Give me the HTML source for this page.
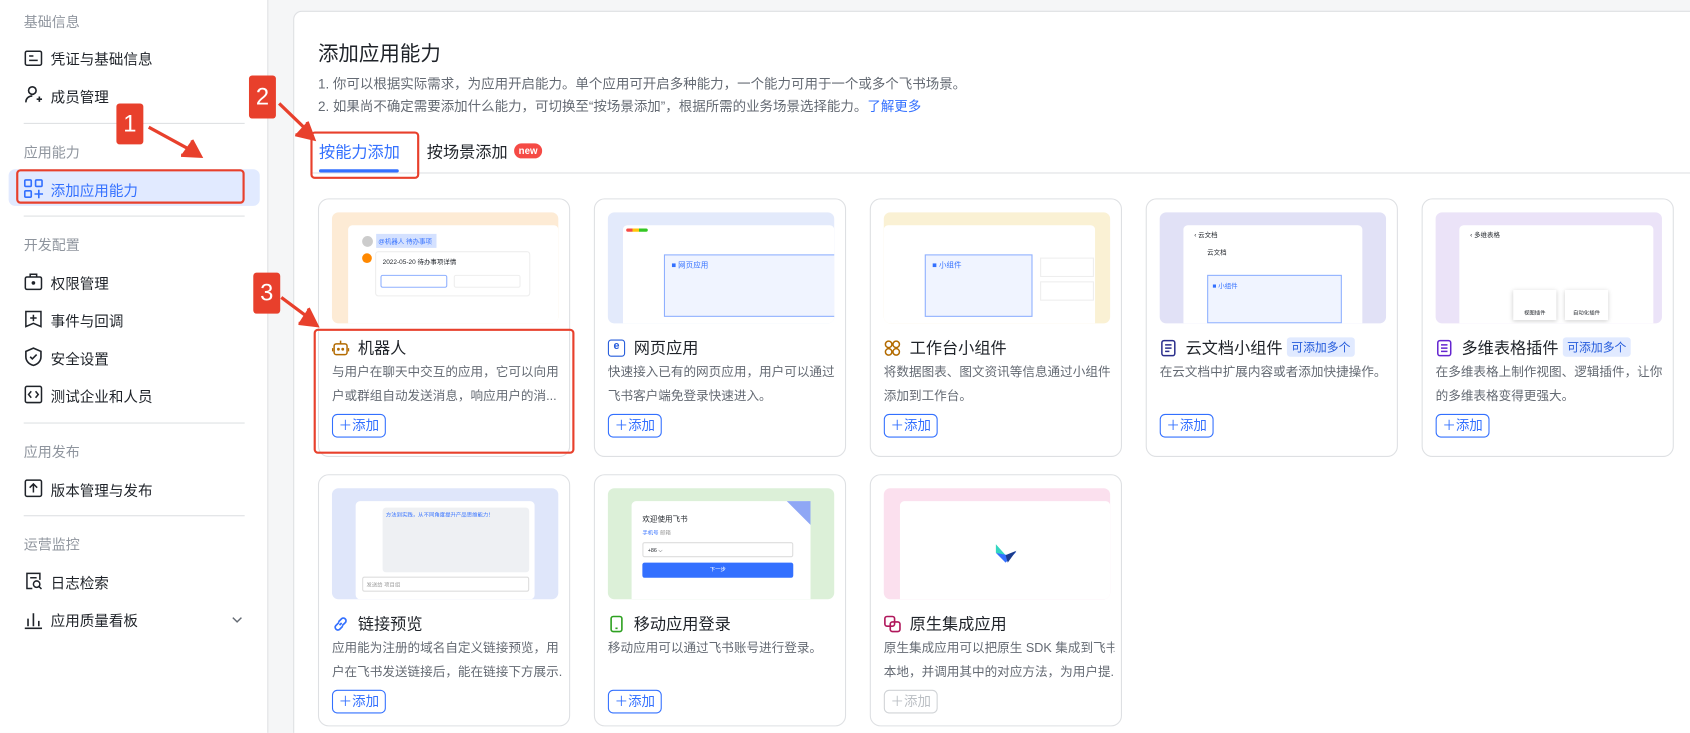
<!DOCTYPE html>
<html><head><meta charset="utf-8"><style>
*{box-sizing:border-box;margin:0;padding:0}
html,body{width:1690px;height:733px;overflow:hidden;background:#f5f6f7}
body{font-family:"Liberation Sans","Noto Sans CJK SC",sans-serif;color:#1f2329;position:relative}
#w{position:absolute;left:0;top:0;width:1568px;height:680px;overflow:hidden;transform:scale(1.0778);transform-origin:0 0}
.a{position:absolute}
.side{left:0;top:0;width:249px;height:680px;background:#fff;border-right:1px solid #dee0e3}
.sh{left:22px;font-size:13px;color:#8f959e}
.si{left:47px;font-size:13.5px;color:#1f2329}
.dv{left:22px;width:205px;height:1px;background:#dee0e3}
.main{left:272px;top:10px;width:1400px;height:700px;background:#fff;border:1px solid #dee0e3;border-radius:8px}
.card{width:234px;height:240px;border:1px solid #dee0e3;border-radius:10px;background:#fff}
.pv{left:12px;top:12px;width:210px;height:103px;border-radius:6px;overflow:hidden}
.pw{left:22px;top:12px;width:166px;height:91px;background:#fff;border-radius:4px 4px 0 0}
.ct{left:36px;top:127px;font-size:15px;color:#1f2329;white-space:nowrap}
.ci{left:12px;top:130px;width:16px;height:16px}
.cd{left:12px;top:150px;width:214px;font-size:11.7px;line-height:22px;color:#646a73;height:44px;overflow:hidden}
.cd div{white-space:nowrap;overflow:hidden}
.btn{left:12px;top:199px;width:50px;height:22px;border:1px solid #3370ff;border-radius:5px;color:#3370ff;font-size:12.5px;line-height:20px;text-align:center;background:#fff}
.tag{display:inline-block;background:#e1eaff;color:#245bdb;font-size:11px;padding:1px 4px;border-radius:3px;vertical-align:2px;margin-left:4px}
.rb{background:#e8402c;color:#fff;font-size:22px;text-align:center;border-radius:3px}
.ro{border:2.5px solid #e8402c;border-radius:4px}
</style></head><body><div id="w">
<div class="a side">
<div class="a sh" style="top:10px">基础信息</div>
<svg class="a" style="left:22px;top:45px" width="18" height="18" viewBox="0 0 18 18" fill="none" stroke="#1f2329" stroke-width="1.4"><rect x="1.5" y="2.5" width="15" height="13" rx="1.5"/><path d="M5 7h4M5 11h8"/></svg><div class="a si" style="top:44px">凭证与基础信息</div>
<svg class="a" style="left:22px;top:79px" width="18" height="18" viewBox="0 0 18 18" fill="none" stroke="#1f2329" stroke-width="1.5"><circle cx="8" cy="5" r="3.5"/><path d="M2 16c0-4 3-6 6-6M12 13h5M14.5 10.5v5"/></svg><div class="a si" style="top:79px">成员管理</div>
<div class="a dv" style="top:114px"></div>
<div class="a sh" style="top:131px">应用能力</div>
<div class="a" style="left:8px;top:157px;width:233px;height:34px;background:#e1eaff;border-radius:6px"></div>
<svg class="a" style="left:22px;top:166px" width="18" height="18" viewBox="0 0 18 18" fill="none" stroke="#3370ff" stroke-width="1.5"><rect x="1" y="1" width="6" height="6" rx="1"/><rect x="11" y="1" width="6" height="6" rx="1"/><rect x="1" y="11" width="6" height="6" rx="1"/><path d="M14 10v8M10 14h8"/></svg>
<div class="a si" style="top:166px;color:#3370ff">添加应用能力</div>
<div class="a dv" style="top:200px"></div>
<div class="a sh" style="top:217px">开发配置</div>
<svg class="a" style="left:22px;top:252px" width="18" height="18" viewBox="0 0 18 18" fill="none" stroke="#1f2329" stroke-width="1.4"><rect x="1.5" y="5" width="15" height="11.5" rx="1.5"/><path d="M6 5V2.5h6V5"/><circle cx="9" cy="10.5" r="1" fill="#1f2329"/></svg><div class="a si" style="top:252px">权限管理</div>
<svg class="a" style="left:22px;top:287px" width="18" height="18" viewBox="0 0 18 18" fill="none" stroke="#1f2329" stroke-width="1.4"><path d="M2 2h14v14l-7-3-7 3z"/><path d="M9 5v6M6 8h6"/></svg><div class="a si" style="top:287px">事件与回调</div>
<svg class="a" style="left:22px;top:322px" width="18" height="18" viewBox="0 0 18 18" fill="none" stroke="#1f2329" stroke-width="1.5"><path d="M9 1l7 3v5c0 4-3 7-7 8-4-1-7-4-7-8V4z"/><path d="M6 9l2 2 4-4"/></svg><div class="a si" style="top:322px">安全设置</div>
<svg class="a" style="left:22px;top:357px" width="18" height="18" viewBox="0 0 18 18" fill="none" stroke="#1f2329" stroke-width="1.4"><rect x="1.5" y="1.5" width="15" height="15" rx="1.5"/><path d="M7 6L4.5 9 7 12M11 6l2.5 3L11 12"/></svg><div class="a si" style="top:357px">测试企业和人员</div>
<div class="a dv" style="top:392px"></div>
<div class="a sh" style="top:409px">应用发布</div>
<svg class="a" style="left:22px;top:444px" width="18" height="18" viewBox="0 0 18 18" fill="none" stroke="#1f2329" stroke-width="1.4"><rect x="1.5" y="1.5" width="15" height="15" rx="1.5"/><path d="M9 13V5M5.5 8.5L9 5l3.5 3.5"/></svg><div class="a si" style="top:444px">版本管理与发布</div>
<div class="a dv" style="top:478px"></div>
<div class="a sh" style="top:495px">运营监控</div>
<svg class="a" style="left:22px;top:530px" width="18" height="18" viewBox="0 0 18 18" fill="none" stroke="#1f2329" stroke-width="1.4"><path d="M15 8V2H3v14h5"/><circle cx="12" cy="12" r="3"/><path d="M14 14l2.5 2.5M6 6h6"/></svg><div class="a si" style="top:530px">日志检索</div>
<svg class="a" style="left:22px;top:566px" width="18" height="18" viewBox="0 0 18 18" fill="none" stroke="#1f2329" stroke-width="1.5"><path d="M1 17h16M4 15V8M9 15V3M14 15V10"/></svg><div class="a si" style="top:565px">应用质量看板</div>
<svg class="a" style="left:214px;top:570px" width="12" height="10" viewBox="0 0 12 10" fill="none" stroke="#646a73" stroke-width="1.3"><path d="M2 3l4 4 4-4"/></svg>
</div>

<div class="a main"></div>
<div class="a" style="left:295px;top:35px;font-size:19px">添加应用能力</div>
<div class="a" style="left:295px;top:67px;font-size:12.5px;color:#646a73">1. 你可以根据实际需求，为应用开启能力。单个应用可开启多种能力，一个能力可用于一个或多个飞书场景。</div>
<div class="a" style="left:295px;top:88px;font-size:12.5px;color:#646a73">2. 如果尚不确定需要添加什么能力，可切换至“按场景添加”，根据所需的业务场景选择能力。<span style="color:#3370ff">了解更多</span></div>
<div class="a" style="left:290px;top:160px;width:1400px;height:1px;background:#dee0e3"></div>
<div class="a" style="left:296px;top:130px;font-size:15px;color:#3370ff">按能力添加</div>
<div class="a" style="left:296px;top:157px;width:74px;height:3px;background:#3370ff;border-radius:2px"></div>
<div class="a" style="left:396px;top:130px;font-size:15px">按场景添加</div>
<div class="a" style="left:477px;top:133px;width:26px;height:14px;background:#f54a45;color:#fff;font-size:9px;font-weight:bold;border-radius:7px;text-align:center;line-height:14px">new</div>

<!-- row 1 -->
<div class="a card" style="left:295px;top:184px">
 <div class="a pv" style="background:#fdebd5"><div class="a pw" style="left:15px;top:12px;width:195px">
  <div class="a" style="left:13px;top:10px;width:10px;height:10px;border-radius:50%;background:#ccc"></div>
  <div class="a" style="left:26px;top:8px;width:56px;height:13px;background:#d4e1ff;font-size:6px;padding:2px;color:#3370ff">@机器人 待办事项</div>
  <div class="a" style="left:13px;top:26px;width:9px;height:9px;border-radius:50%;background:#ff8800"></div>
  <div class="a" style="left:25px;top:24px;width:144px;height:42px;border:1px solid #eee;border-radius:3px;font-size:6px;padding:4px 6px">2022-05-20 待办事项详情</div>
  <div class="a" style="left:30px;top:46px;width:62px;height:12px;border:1px solid #8fb0ff;border-radius:2px"></div>
  <div class="a" style="left:98px;top:46px;width:62px;height:12px;border:1px solid #eee;border-radius:2px"></div>
 </div></div>
 <svg class="a ci" viewBox="0 0 16 16" fill="none" stroke="#b36b00" stroke-width="1.4"><rect x="2" y="4" width="12" height="10" rx="2"/><path d="M8 1v3M0.5 8v3M15.5 8v3"/><circle cx="6" cy="9" r=".6" fill="#b36b00"/><circle cx="10" cy="9" r=".6" fill="#b36b00"/></svg>
 <div class="a ct">机器人</div>
 <div class="a cd">与用户在聊天中交互的应用，它可以向用户或群组自动发送消息，响应用户的消...</div>
 <div class="a btn">＋添加</div>
</div>
<div class="a card" style="left:551px;top:184px">
 <div class="a pv" style="background:#e3eafb"><div class="a pw" style="left:14px;width:196px">
  <div class="a" style="left:3px;top:3px;width:20px;height:3px;border-radius:2px;background:linear-gradient(90deg,#f54a45 30%,#ffc60a 30% 60%,#34c724 60%)"></div>
  <div class="a" style="left:38px;top:27px;width:160px;height:58px;border:1px solid #8fb0ff;background:#f0f4ff;font-size:7px;color:#3370ff;padding:4px 6px">■ 网页应用</div>
 </div></div>
 <div class="a ci" style="border:1.5px solid #245bdb;border-radius:3px;font-size:10px;color:#245bdb;text-align:center;line-height:12px;font-weight:bold">e</div>
 <div class="a ct">网页应用</div>
 <div class="a cd">快速接入已有的网页应用，用户可以通过飞书客户端免登录快速进入。</div>
 <div class="a btn">＋添加</div>
</div>
<div class="a card" style="left:807px;top:184px">
 <div class="a pv" style="background:#faf1d4"><div class="a pw" style="left:0;width:196px">
  <div class="a" style="left:38px;top:27px;width:100px;height:58px;border:1px solid #8fb0ff;background:#f0f4ff;font-size:7px;color:#3370ff;padding:4px 6px">■ 小组件</div>
  <div class="a" style="left:145px;top:30px;width:50px;height:18px;border:1px solid #eee"></div>
  <div class="a" style="left:145px;top:52px;width:50px;height:18px;border:1px solid #eee"></div>
 </div></div>
 <svg class="a ci" viewBox="0 0 16 16" fill="none" stroke="#b36b00" stroke-width="1.4"><circle cx="4.5" cy="4.5" r="3"/><circle cx="11.5" cy="4.5" r="3"/><circle cx="4.5" cy="11.5" r="3"/><circle cx="11.5" cy="11.5" r="3"/></svg>
 <div class="a ct">工作台小组件</div>
 <div class="a cd">将数据图表、图文资讯等信息通过小组件添加到工作台。</div>
 <div class="a btn">＋添加</div>
</div>
<div class="a card" style="left:1063px;top:184px">
 <div class="a pv" style="background:#e1e1f6"><div class="a pw">
  <div class="a" style="left:10px;top:4px;font-size:6px">‹ 云文档</div>
  <div class="a" style="left:22px;top:20px;font-size:6px">云文档</div>
  <div class="a" style="left:22px;top:46px;width:125px;height:45px;border:1px solid #8fb0ff;background:#f0f4ff;font-size:6px;color:#3370ff;padding:4px">■ 小组件</div>
 </div></div>
 <svg class="a ci" viewBox="0 0 16 16" fill="none" stroke="#2b2f8c" stroke-width="1.4"><rect x="2" y="1" width="12" height="14" rx="2"/><path d="M5 5h6M5 8h6M5 11h4"/></svg>
 <div class="a ct">云文档小组件<span class="tag">可添加多个</span></div>
 <div class="a cd">在云文档中扩展内容或者添加快捷操作。</div>
 <div class="a btn">＋添加</div>
</div>
<div class="a card" style="left:1319px;top:184px">
 <div class="a pv" style="background:#ebe3f8"><div class="a pw" style="width:180px">
  <div class="a" style="left:10px;top:4px;font-size:6px">‹ 多维表格</div>
  <div class="a" style="left:50px;top:60px;width:40px;height:28px;background:#fff;box-shadow:0 1px 4px #ccc;font-size:5px;text-align:center;padding-top:18px">视图插件</div>
  <div class="a" style="left:98px;top:60px;width:40px;height:28px;background:#fff;box-shadow:0 1px 4px #ccc;font-size:5px;text-align:center;padding-top:18px">自动化插件</div>
 </div></div>
 <svg class="a ci" viewBox="0 0 16 16" fill="none" stroke="#6425d0" stroke-width="1.4"><rect x="2" y="1" width="12" height="14" rx="2"/><path d="M5 5h6M5 8h6M5 11h6"/></svg>
 <div class="a ct">多维表格插件<span class="tag">可添加多个</span></div>
 <div class="a cd">在多维表格上制作视图、逻辑插件，让你的多维表格变得更强大。</div>
 <div class="a btn">＋添加</div>
</div>

<!-- row 2 -->
<div class="a card" style="left:295px;top:440px;height:234px">
 <div class="a pv" style="background:#dfe6fa"><div class="a pw" style="left:22px;height:91px;width:166px;border-radius:4px">
  <div class="a" style="left:25px;top:6px;width:136px;height:60px;background:#eef0f3;border-radius:3px;font-size:5px;color:#3370ff;padding:3px">方法到实践，从不同角度提升产品思维能力！</div>
  <div class="a" style="left:6px;top:70px;width:155px;height:14px;border:1px solid #ddd;border-radius:2px;font-size:5px;color:#999;padding:3px">发送给 项目组</div>
 </div></div>
 <svg class="a ci" viewBox="0 0 16 16" fill="none" stroke="#3370ff" stroke-width="1.6"><path d="M7 9l2-2M6 6l3-3a2.5 2.5 0 013.5 3.5l-3 3M10 10l-3 3a2.5 2.5 0 01-3.5-3.5l3-3"/></svg>
 <div class="a ct">链接预览</div>
 <div class="a cd"><div>应用能为注册的域名自定义链接预览，用</div><div>户在飞书发送链接后，能在链接下方展示...</div></div>
 <div class="a btn">＋添加</div>
</div>
<div class="a card" style="left:551px;top:440px;height:234px">
 <div class="a pv" style="background:#dcf0d8"><div class="a pw" style="top:12px;height:91px">
  <div class="a" style="left:10px;top:12px;font-size:7px">欢迎使用飞书</div>
  <div class="a" style="left:10px;top:26px;font-size:5px;color:#3370ff">手机号 <span style="color:#999">邮箱</span></div>
  <div class="a" style="left:10px;top:38px;width:140px;height:14px;border:1px solid #ddd;border-radius:2px;font-size:5px;padding:4px">+86 ⌵</div>
  <div class="a" style="left:10px;top:57px;width:140px;height:14px;background:#3370ff;border-radius:2px;color:#fff;font-size:5px;text-align:center;line-height:14px">下一步</div>
  <div class="a" style="right:0;top:0;width:0;height:0;border-top:22px solid #8fa7f5;border-left:22px solid transparent"></div>
 </div></div>
 <svg class="a ci" viewBox="0 0 16 16" fill="none" stroke="#2ea121" stroke-width="1.5"><rect x="3" y="1" width="10" height="14" rx="2"/><path d="M7 12h2"/></svg>
 <div class="a ct">移动应用登录</div>
 <div class="a cd">移动应用可以通过飞书账号进行登录。</div>
 <div class="a btn">＋添加</div>
</div>
<div class="a card" style="left:807px;top:440px;height:234px">
 <div class="a pv" style="background:#fbe0ee"><div class="a pw" style="left:15px;width:195px">
  <svg class="a" style="left:86px;top:38px" width="24" height="20" viewBox="0 0 24 20"><path d="M3 2l9 10 -9 -2z" fill="#33d6c0"/><path d="M3 10l9 9 10-10-8 3z" fill="#3370ff"/><path d="M12 12l10-4-8 11z" fill="#1a3c8f"/></svg>
 </div></div>
 <svg class="a ci" viewBox="0 0 16 16" fill="none" stroke="#b0175b" stroke-width="1.5"><rect x="1" y="1" width="9" height="9" rx="2"/><rect x="6" y="6" width="9" height="9" rx="2"/></svg>
 <div class="a ct">原生集成应用</div>
 <div class="a cd"><div>原生集成应用可以把原生 SDK 集成到飞书</div><div>本地，并调用其中的对应方法，为用户提...</div></div>
 <div class="a btn" style="border-color:#d0d3d6;color:#bbbfc4">＋添加</div>
</div>

<!-- annotations -->
<div class="a ro" style="left:15px;top:157px;width:212px;height:32px"></div>
<div class="a ro" style="left:288px;top:122px;width:101px;height:44px"></div>
<div class="a ro" style="left:291px;top:305px;width:242px;height:116px"></div>
<div class="a rb" style="left:108px;top:96px;width:25px;height:38px;line-height:38px">1</div>
<div class="a rb" style="left:231px;top:70px;width:25px;height:40px;line-height:40px">2</div>
<div class="a rb" style="left:235px;top:253px;width:25px;height:38px;line-height:38px">3</div>
<svg class="a" style="left:0;top:0" width="600" height="330" fill="none" stroke="#e8402c" stroke-width="3">
<path d="M138 118L182 142"/><path d="M168 144L186 145L178 130" fill="#e8402c"/>
<path d="M259 96L286 122"/><path d="M274 125L291 129L285 113" fill="#e8402c"/>
<path d="M261 276L288 296"/><path d="M277 300L294 302L286 286" fill="#e8402c"/>
</svg>
</div></body></html>
